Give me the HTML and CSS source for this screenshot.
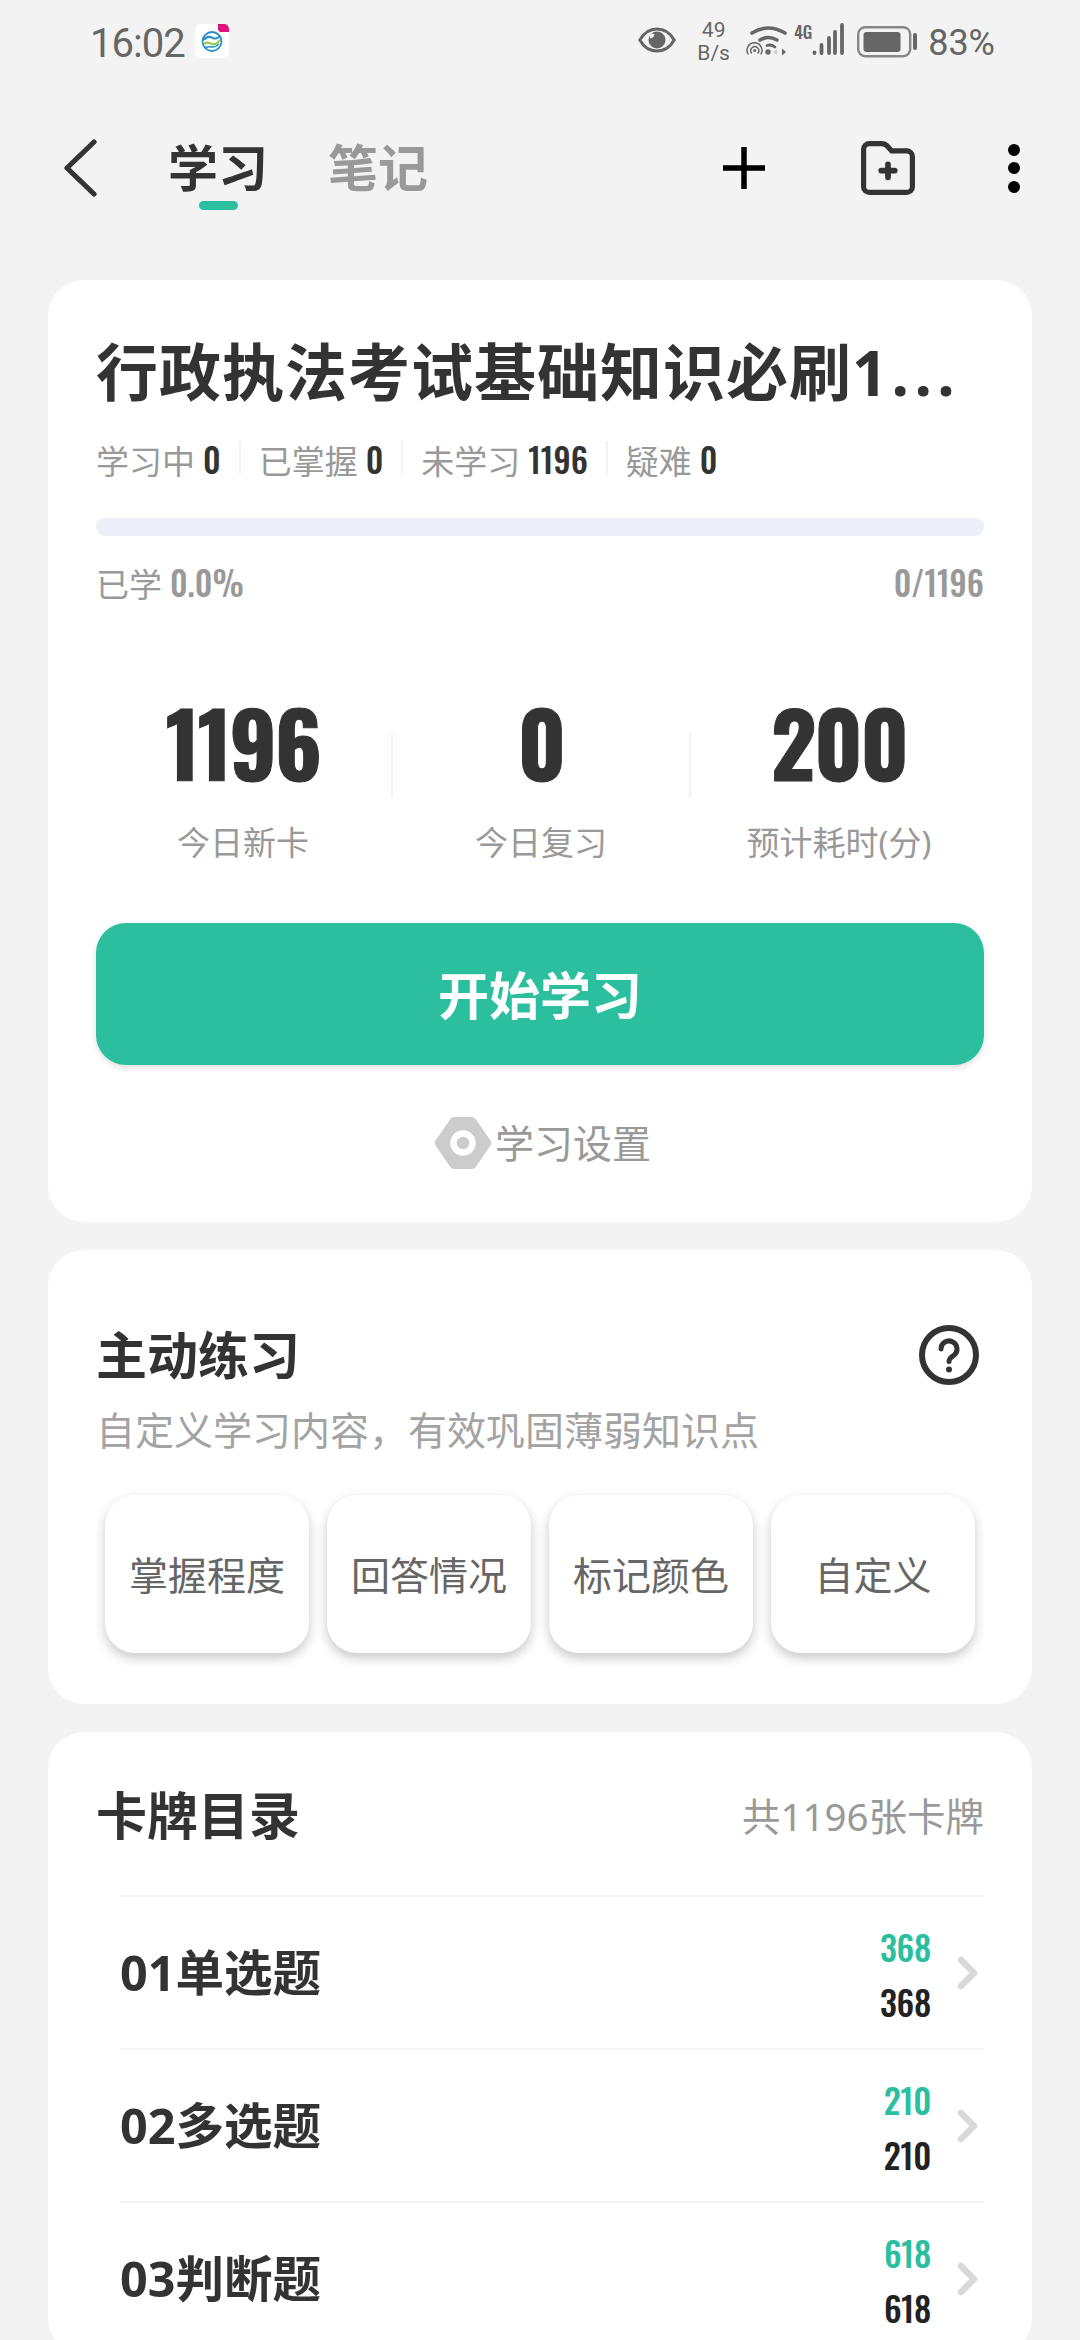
FILE: index.html
```html
<!DOCTYPE html>
<html lang="zh-CN">
<head>
<meta charset="utf-8">
<title>学习</title>
<link rel="stylesheet" href="styles.css">
</head>
<body>
<div class="page">
  <header class="status">
    <div class="status-left">
      <span class="time">16:02</span>
      <svg class="carrier" viewBox="0 0 34 34" width="34" height="34">
        <rect width="34" height="34" rx="5" fill="#fff"/>
        <path d="M23 0h6a5 5 0 0 1 5 5v3H25l-2-2z" fill="#e0117d"/>
        <circle cx="17" cy="17.500" r="9.500" fill="none" stroke="#2a8fc9" stroke-width="1.800"/>
        <path d="M9 16c3-5 7-3 9-2s5 1 7-3" fill="none" stroke="#2a8fc9" stroke-width="2"/>
        <path d="M9 20c3-3 5-1 8 0s5 0 8-4" fill="none" stroke="#8cc63f" stroke-width="2"/>
        <path d="M10 24c3-2 6-1 8-1s4-1 6-3" fill="none" stroke="#2a8fc9" stroke-width="1.600"/>
      </svg>
    </div>
    <div class="status-right">
      <svg class="eye" viewBox="0 0 38 26" width="38" height="26">
        <path d="M1.800 13C6 5.500 12 2 19 2s13 3.500 17.200 11C32 20.500 26 24 19 24S6 20.500 1.800 13Z" fill="none" stroke="#666" stroke-width="3"/>
        <circle cx="19" cy="13" r="8.500" fill="#666"/>
        <path d="M12 11.500a5 5 0 0 0 4.500-4.500l-3-.5-2 2z" fill="#f3f3f3"/>
      </svg>
      <div class="speed"><span>49</span><span>B/s</span></div>
      <svg class="wifi" viewBox="0 0 42 32" width="42" height="32">
        <g fill="none" stroke="#666" stroke-linecap="round">
          <path d="M7 9Q23 -1 40 9" stroke-width="3.600"/>
          <path d="M15 16Q23 11 32 16" stroke-width="3.600"/>
          <path d="M22 21.500Q26 20 30 23" stroke-width="2.800"/>
          <path d="M3 30A7.500 7.500 0 1 1 16 30" stroke-width="1.500"/>
          <path d="M6.500 29A4 4 0 1 1 13 29" stroke-width="1.500"/>
        </g>
        <circle cx="9.700" cy="26.500" r="1.500" fill="#666"/>
        <circle cx="23" cy="28" r="2.700" fill="#666"/>
        <path d="M28 28l4-3v6z" fill="#ccc"/>
        <path d="M37 24.500l4 3.500-4 3.500z" fill="#666"/>
      </svg>
      <div class="net">
        <span class="net-label">4G</span>
        <svg viewBox="0 0 32 32" width="32" height="32">
          <g fill="none" stroke="#666" stroke-width="3.800" stroke-linecap="round">
            <path d="M2.500 29.500V30"/><path d="M9.500 22V30"/><path d="M17 15V30"/><path d="M23 9V30"/><path d="M30 2V30"/>
          </g>
        </svg>
      </div>
      <svg class="battery" viewBox="0 0 60 32" width="60" height="32">
        <rect x="1.200" y="1.200" width="52" height="29" rx="7" fill="none" stroke="#888" stroke-width="2.400"/>
        <rect x="6.500" y="6" width="37" height="20" rx="3" fill="#666"/>
        <rect x="56" y="7" width="4" height="17" rx="2" fill="#666"/>
      </svg>
      <span class="percent">83%</span>
    </div>
  </header>

  <nav class="nav">
    <svg class="back" viewBox="0 0 34 58" width="34" height="58">
      <path d="M31 3L4 29l27 26" fill="none" stroke="#333" stroke-width="5.200" stroke-linecap="round" stroke-linejoin="round"/>
    </svg>
    <div class="tabs">
      <div class="tab tab-on"><span>学习</span><i class="tab-bar"></i></div>
      <div class="tab"><span>笔记</span><i class="tab-bar"></i></div>
    </div>
    <div class="actions">
      <svg class="act-plus" viewBox="0 0 42 42" width="42" height="42">
        <path d="M21 0V42M0 21H42" fill="none" stroke="#000" stroke-width="5.500"/>
      </svg>
      <svg class="act-folder" viewBox="0 0 52 52" width="54" height="54">
        <path d="M2.500 8a5.500 5.500 0 0 1 5.500-5.500h12c2.500 0 4 1 5.500 2.500l4 4.500H44a5.500 5.500 0 0 1 5.500 5.500V44a5.500 5.500 0 0 1-5.500 5.500H8A5.500 5.500 0 0 1 2.500 44Z" fill="none" stroke="#333" stroke-width="5"/>
        <path d="M26 22.500V35M19.500 28.500H32.500" fill="none" stroke="#333" stroke-width="5.500" stroke-linecap="round"/>
      </svg>
      <div class="dots"><i></i><i></i><i></i></div>
    </div>
  </nav>

  <main class="cards">
    <section class="card card-main">
      <h1 class="deck-title">行政执法考试基础知识必刷1<span class="ellipsis">...</span></h1>
      <div class="meta">
        <span class="meta-item">学习中<b>0</b></span><i class="meta-sep"></i>
        <span class="meta-item">已掌握<b>0</b></span><i class="meta-sep"></i>
        <span class="meta-item">未学习<b>1196</b></span><i class="meta-sep"></i>
        <span class="meta-item">疑难<b>0</b></span>
      </div>
      <div class="progress"></div>
      <div class="progress-labels">
        <span>已学<b>0.0%</b></span>
        <b>0/1196</b>
      </div>
      <div class="stats">
        <div class="stat"><div class="stat-num">1196</div><div class="stat-label">今日新卡</div></div>
        <i class="stat-sep"></i>
        <div class="stat"><div class="stat-num">0</div><div class="stat-label">今日复习</div></div>
        <i class="stat-sep"></i>
        <div class="stat"><div class="stat-num">200</div><div class="stat-label">预计耗时(分)</div></div>
      </div>
      <button class="start">开始学习</button>
      <div class="settings">
        <svg viewBox="0 0 58 52" width="58" height="52">
          <path d="M16 2.500C17 1 18 0 20 0h18c2 0 3 1 4 2.500l14.500 21c1 1.500 1 3.500 0 5L42 49.500C41 51 40 52 38 52H20c-2 0-3-1-4-2.500l-14.500-21c-1-1.500-1-3.500 0-5Z" fill="#ccc"/>
          <circle cx="29" cy="26" r="9.500" fill="none" stroke="#fff" stroke-width="6.500"/>
        </svg>
        <span>学习设置</span>
      </div>
    </section>

    <section class="card card-practice">
      <div class="card-head">
        <h2>主动练习</h2>
        <svg viewBox="0 0 60 60" width="60" height="60">
          <circle cx="30" cy="30" r="27" fill="none" stroke="#333" stroke-width="6"/>
          <path d="M22 24a8 8 0 1 1 13 6.200c-3 2.200-5 3.300-5 6.300" fill="none" stroke="#333" stroke-width="5" stroke-linecap="round"/>
          <circle cx="30" cy="44.500" r="3" fill="#333"/>
        </svg>
      </div>
      <p class="sub">自定义学习内容，有效巩固薄弱知识点</p>
      <div class="filters">
        <div class="filter">掌握程度</div>
        <div class="filter">回答情况</div>
        <div class="filter">标记颜色</div>
        <div class="filter">自定义</div>
      </div>
    </section>

    <section class="card card-list">
      <div class="card-head">
        <h2>卡牌目录</h2>
        <span class="count">共1196张卡牌</span>
      </div>
      <ul class="rows">
        <li class="row">
          <span class="row-name">01单选题</span>
          <div class="row-nums"><span class="green">368</span><span>368</span></div>
          <svg class="chev" viewBox="0 0 22 34" width="22" height="34"><path d="M4 4l13 13L4 30" fill="none" stroke="#d8d8d8" stroke-width="6.500" stroke-linecap="round" stroke-linejoin="round"/></svg>
        </li>
        <li class="row">
          <span class="row-name">02多选题</span>
          <div class="row-nums"><span class="green">210</span><span>210</span></div>
          <svg class="chev" viewBox="0 0 22 34" width="22" height="34"><path d="M4 4l13 13L4 30" fill="none" stroke="#d8d8d8" stroke-width="6.500" stroke-linecap="round" stroke-linejoin="round"/></svg>
        </li>
        <li class="row">
          <span class="row-name">03判断题</span>
          <div class="row-nums"><span class="green">618</span><span>618</span></div>
          <svg class="chev" viewBox="0 0 22 34" width="22" height="34"><path d="M4 4l13 13L4 30" fill="none" stroke="#d8d8d8" stroke-width="6.500" stroke-linecap="round" stroke-linejoin="round"/></svg>
        </li>
      </ul>
    </section>
  </main>
</div>
</body>
</html>
```
FILE: styles.css
```css
* { box-sizing: border-box; }
html, body { margin: 0; padding: 0; height: 2340px; overflow: hidden; }
body {
  background: #f3f3f3;
  color: #333;
  font-family: "Noto Sans", "Noto Sans CJK SC", sans-serif;
}
.page { width: 1080px; height: 2340px; overflow: hidden; }
h1, h2, p, ul { margin: 0; padding: 0; }
i { font-style: normal; display: block; }

/* status bar */
.status {
  height: 84px;
  display: flex;
  justify-content: space-between;
  padding: 23px 85px 0 90px;
  color: #666;
}
.status-left { display: flex; align-items: flex-start; gap: 10px; }
.time {
  font-family: Roboto, sans-serif;
  font-size: 40px;
  line-height: 42px;
  letter-spacing: -1px;
}
.carrier { margin-top: 1px; }
.status-right { display: flex; align-items: flex-start; }
.eye { margin-top: 4px; margin-right: 21px; }
.speed {
  display: flex;
  flex-direction: column;
  align-items: center;
  width: 33px;
  margin-right: 15px;
  margin-top: -4px;
  font-family: Roboto, sans-serif;
  font-size: 21px;
}
.speed span { display: block; height: 23px; line-height: 23px; }
.wifi { margin-right: 7px; margin-top: 1px; }
.net { display: flex; align-items: flex-start; margin-right: 13px; }
.net-label {
  width: 18px;
  font-family: Oswald, sans-serif;
  font-weight: 500;
  font-size: 17px;
  line-height: 18px;
}
.battery { margin-right: 11px; margin-top: 3px; }
.percent {
  font-family: Roboto, sans-serif;
  font-size: 36px;
  line-height: 38px;
  margin-top: 1px;
}

/* nav */
.nav {
  height: 168px;
  display: flex;
  align-items: center;
  padding: 0 60px 0 63px;
  margin-bottom: 28px;
}
.back { margin-right: 71px; }
.tabs { display: flex; gap: 60px; align-self: flex-start; margin-top: 56px; }
.tab {
  display: flex;
  flex-direction: column;
  align-items: center;
  color: #999;
  font-size: 50px;
  font-weight: 700;
  line-height: 56px;
}
.tab-on { color: #333; }
.tab-bar { width: 39px; height: 9px; margin-top: 5px; border-radius: 5px; }
.tab-on .tab-bar { background: #2bbf9f; }
.actions { margin-left: auto; display: flex; align-items: center; }
.act-plus { margin-right: 96px; }
.act-folder { margin-right: 93px; }
.dots { display: flex; flex-direction: column; gap: 6.500px; }
.dots i { width: 12px; height: 12px; border-radius: 50%; background: #000; }

/* cards */
.cards { display: flex; flex-direction: column; gap: 28px; padding: 0 48px; }
.card { background: #fff; border-radius: 36px; padding-left: 48px; padding-right: 48px; }
.card-main { padding-top: 62px; height: 942px; }
.deck-title {
  font-size: 62px;
  font-weight: 700;
  line-height: 60px;
  letter-spacing: 1px;
  white-space: nowrap;
}
.ellipsis { letter-spacing: 5.500px; margin-left: 3px; }
.meta {
  display: flex;
  align-items: center;
  margin-top: 36px;
  height: 44px;
  font-size: 33px;
  color: #999;
}
.meta-item { display: flex; align-items: center; }
.meta-item b {
  font-family: Oswald, sans-serif;
  font-weight: 500;
  color: #333;
  margin-left: 8px;
  font-size: 33px;
  line-height: 44px;
}
.meta-sep { width: 2px; height: 33px; background: #f2f2f2; margin: -5px 18px 0; }
.progress { height: 18px; margin-top: 36px; border-radius: 9px; background: #eceff7; }
.progress-labels {
  display: flex;
  justify-content: space-between;
  margin-top: 25px;
  font-size: 33px;
  line-height: 44px;
  color: #999;
}
.progress-labels b { font-family: Oswald, sans-serif; font-weight: 500; font-size: 33px; }
.progress-labels span b { margin-left: 8px; }
.stats { display: flex; margin: 74px -3px 0 -1px; }
.stat { flex: 1; text-align: center; }
.stat-num {
  font-family: Oswald, sans-serif;
  font-weight: 700;
  font-size: 88px;
  line-height: 120px;
  letter-spacing: -2px;
  -webkit-text-stroke: 1px #333;
  color: #333;
}
.stat-label { margin-top: 20px; font-size: 33px; line-height: 44px; color: #999; white-space: nowrap; }
.stat-sep { width: 2px; height: 64px; margin-top: 52px; background: #f2f2f2; }
.start {
  display: block;
  width: 100%;
  height: 142px;
  margin-top: 58px;
  padding: 0 0 3px;
  border: 0;
  border-radius: 30px;
  background: #2bbf9f;
  color: #fff;
  font-family: "Noto Sans", "Noto Sans CJK SC", sans-serif;
  font-size: 51px;
  font-weight: 700;
  box-shadow: 0 3px 6px rgba(0, 0, 0, .12);
}
.settings {
  display: flex;
  justify-content: center;
  align-items: center;
  gap: 3px;
  height: 56px;
  margin-top: 50px;
  padding-left: 5px;
  font-size: 39px;
  color: #999;
}
.settings span { margin-bottom: 5px; }
.card-practice { padding-top: 75px; padding-bottom: 51px; }
.card-head { display: flex; justify-content: space-between; align-items: center; height: 60px; }
.card-head h2 { font-size: 51px; font-weight: 700; line-height: 60px; }
.card-practice .card-head svg { margin-right: 5px; }
.sub { margin-top: 20px; font-size: 39px; line-height: 50px; color: #a3a3a3; white-space: nowrap; }
.filters { display: flex; gap: 18px; margin: 40px 9px 0; }
.filter {
  flex: 1;
  height: 158px;
  display: flex;
  align-items: center;
  justify-content: center;
  padding-bottom: 2px;
  border-radius: 30px;
  background: #fff;
  box-shadow: 0 5px 12px rgba(0, 0, 0, .22);
  font-size: 39px;
  color: #666;
}
.card-list { padding-top: 53px; }
.count { font-size: 38.500px; color: #999; margin-bottom: 2px; }
.rows { list-style: none; margin: 50px 0 0 24px; }
.row {
  height: 153px;
  display: flex;
  align-items: center;
  border-top: 2px solid #f3f3f3;
  padding-right: 5px;
}
.row-name { flex: 1; font-size: 48.500px; font-weight: 700; color: #333; margin-bottom: 5px; }
.row-nums {
  display: flex;
  flex-direction: column;
  align-items: flex-end;
  margin-top: 2px;
  font-family: Oswald, sans-serif;
  font-weight: 500;
  font-size: 34px;
  line-height: 55px;
  letter-spacing: -.3px;
  color: #222;
}
.green { color: #2bbf9f; }
.chev { margin-left: 26px; }
```
